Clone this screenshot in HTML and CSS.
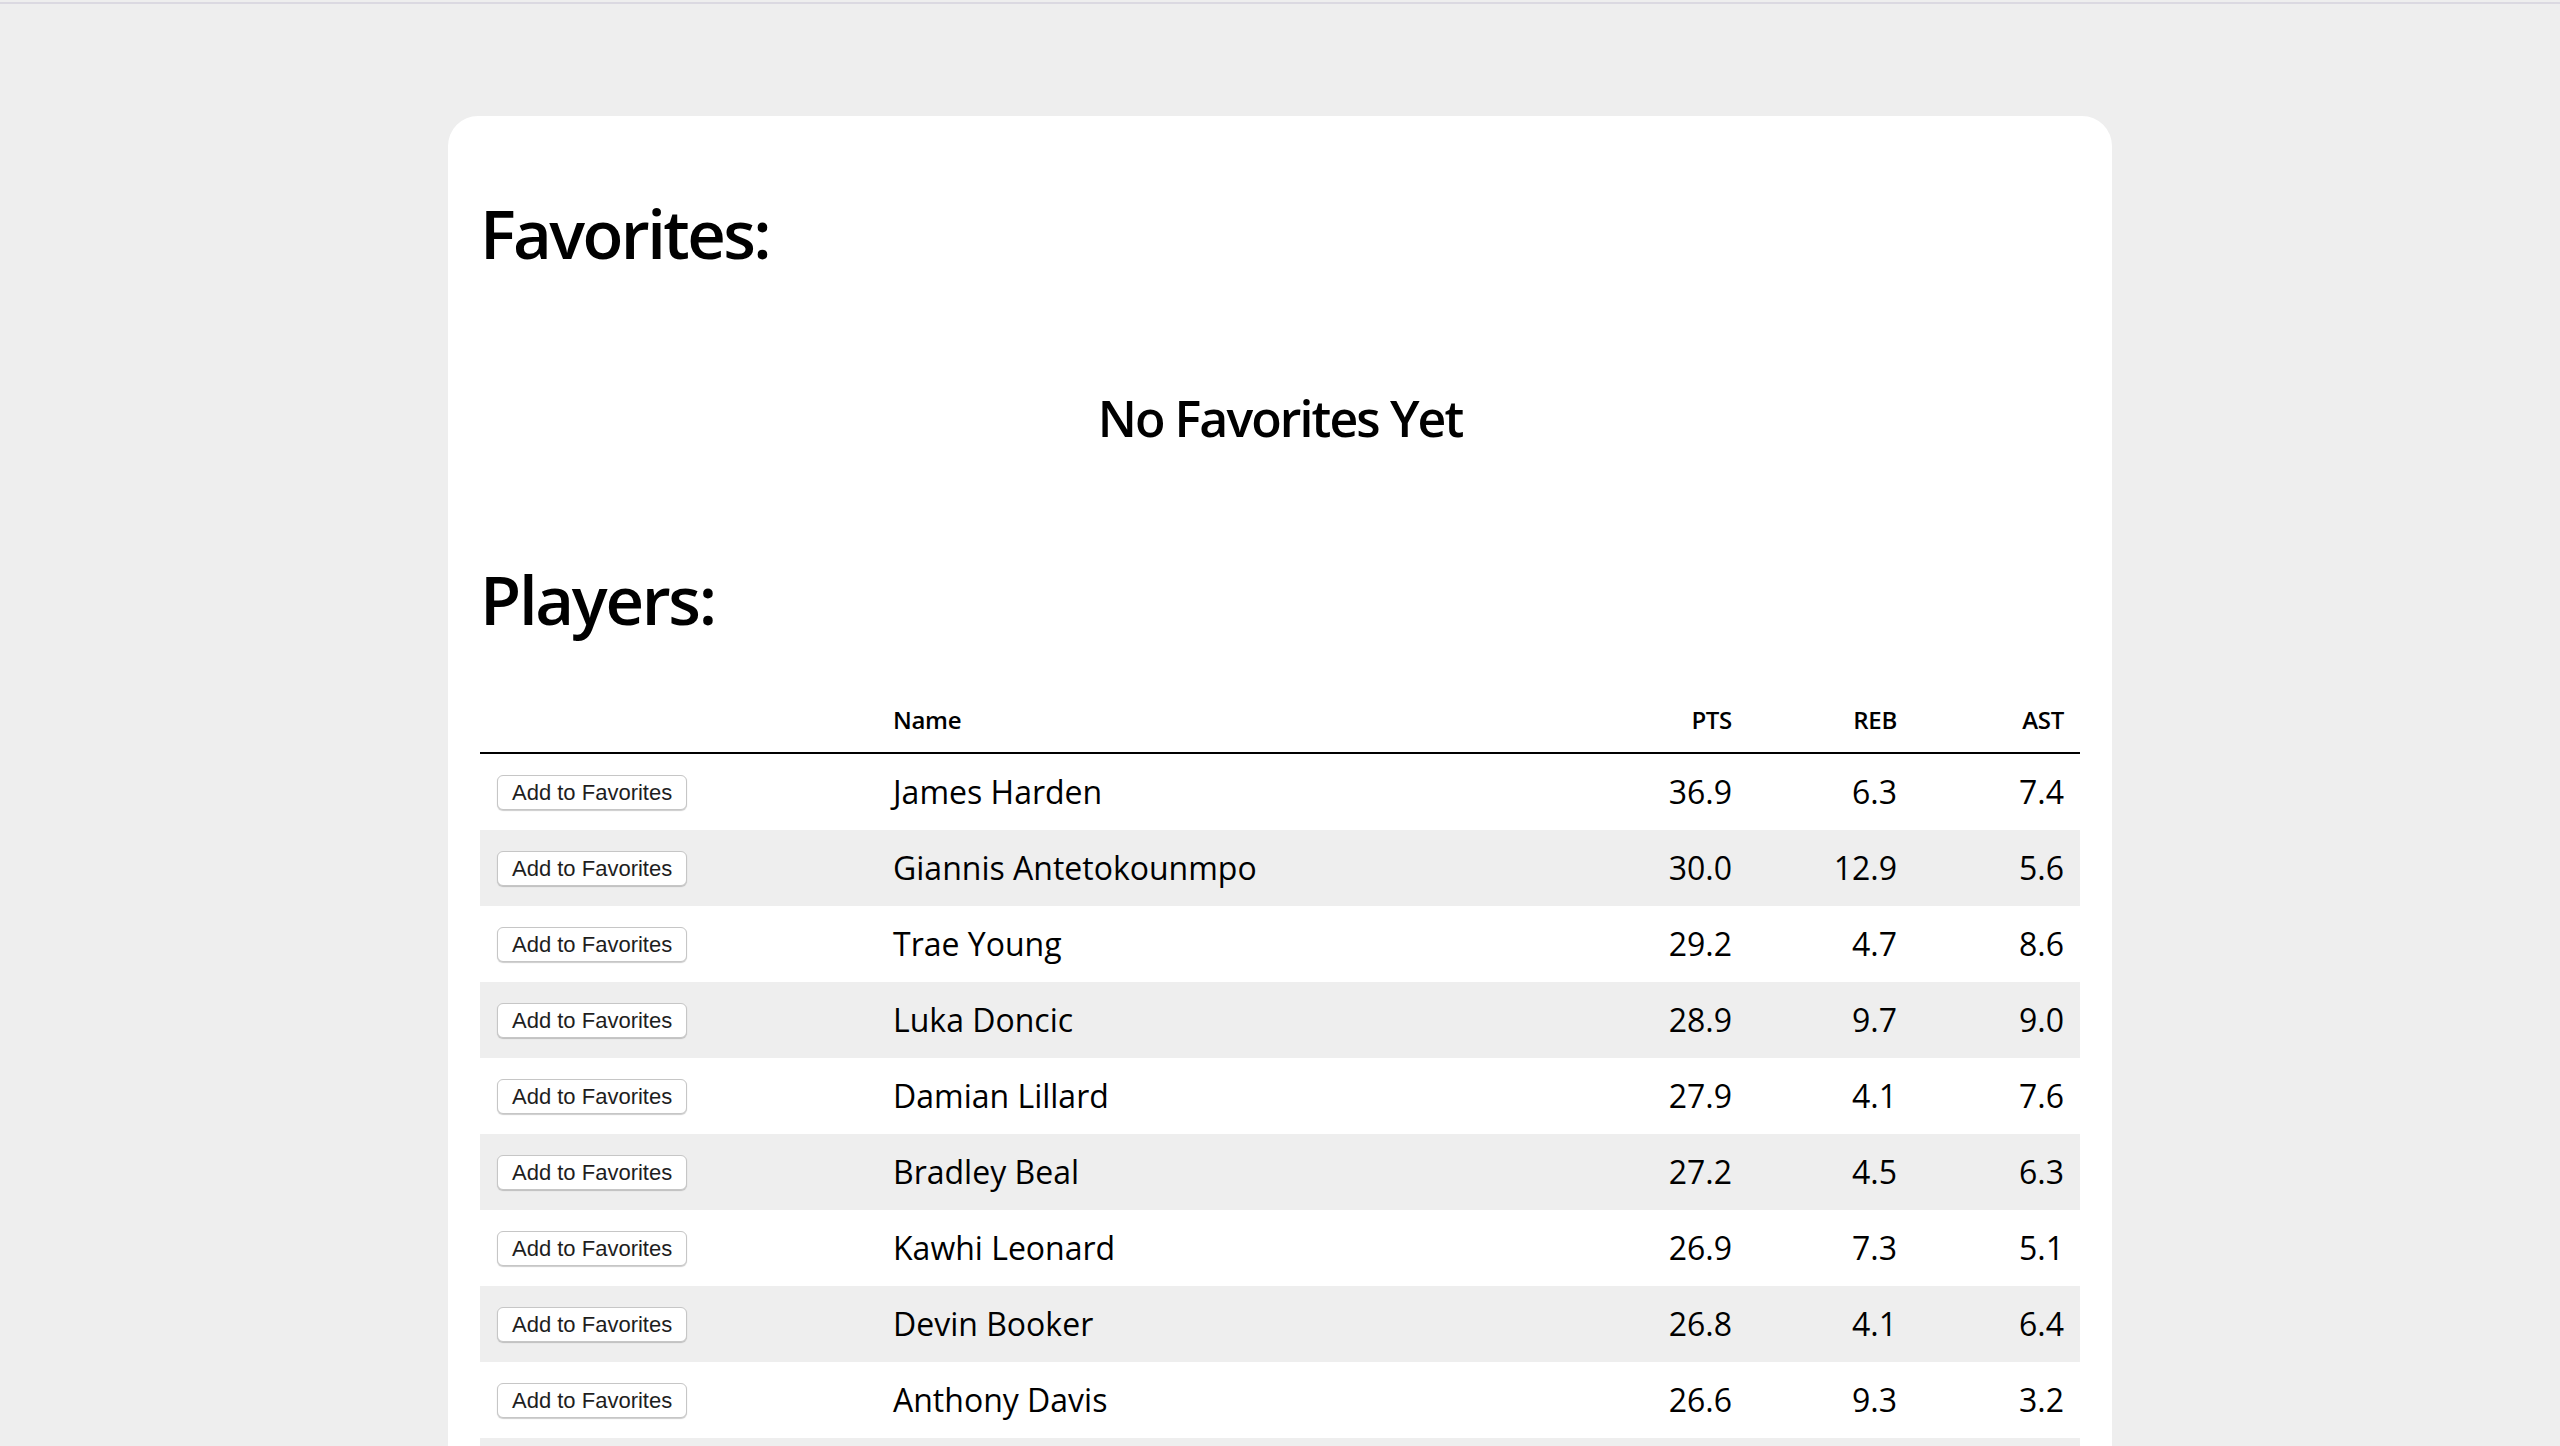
FILE: index.html
```html
<!DOCTYPE html>
<html lang="en">
<head>
<meta charset="utf-8">
<title>Players</title>
<link rel="stylesheet" href="styles.css">
</head>
<body>
<div class="topline"></div>
<main class="card">
  <h1 class="title title-first">Favorites:</h1>
  <div class="empty">
    <h2 class="empty-text">No Favorites Yet</h2>
  </div>
  <h1 class="title title-players">Players:</h1>
  <table class="players">
    <colgroup>
      <col class="c-btn">
      <col class="c-name">
      <col class="c-num">
      <col class="c-num">
      <col class="c-ast">
    </colgroup>
    <thead>
      <tr>
        <th></th>
        <th class="left">Name</th>
        <th class="right">PTS</th>
        <th class="right">REB</th>
        <th class="right">AST</th>
      </tr>
    </thead>
    <tbody>
      <tr><td><button class="fav">Add to Favorites</button></td><td>James Harden</td><td class="right">36.9</td><td class="right">6.3</td><td class="right">7.4</td></tr>
      <tr><td><button class="fav">Add to Favorites</button></td><td>Giannis Antetokounmpo</td><td class="right">30.0</td><td class="right">12.9</td><td class="right">5.6</td></tr>
      <tr><td><button class="fav">Add to Favorites</button></td><td>Trae Young</td><td class="right">29.2</td><td class="right">4.7</td><td class="right">8.6</td></tr>
      <tr><td><button class="fav">Add to Favorites</button></td><td>Luka Doncic</td><td class="right">28.9</td><td class="right">9.7</td><td class="right">9.0</td></tr>
      <tr><td><button class="fav">Add to Favorites</button></td><td>Damian Lillard</td><td class="right">27.9</td><td class="right">4.1</td><td class="right">7.6</td></tr>
      <tr><td><button class="fav">Add to Favorites</button></td><td>Bradley Beal</td><td class="right">27.2</td><td class="right">4.5</td><td class="right">6.3</td></tr>
      <tr><td><button class="fav">Add to Favorites</button></td><td>Kawhi Leonard</td><td class="right">26.9</td><td class="right">7.3</td><td class="right">5.1</td></tr>
      <tr><td><button class="fav">Add to Favorites</button></td><td>Devin Booker</td><td class="right">26.8</td><td class="right">4.1</td><td class="right">6.4</td></tr>
      <tr><td><button class="fav">Add to Favorites</button></td><td>Anthony Davis</td><td class="right">26.6</td><td class="right">9.3</td><td class="right">3.2</td></tr>
      <tr><td><button class="fav">Add to Favorites</button></td><td>Karl-Anthony Towns</td><td class="right">26.5</td><td class="right">10.8</td><td class="right">4.4</td></tr>
      <tr><td><button class="fav">Add to Favorites</button></td><td>Russell Westbrook</td><td class="right">26.3</td><td class="right">7.9</td><td class="right">6.8</td></tr>
    </tbody>
  </table>
</main>
</body>
</html>
```
FILE: styles.css
```css
html, body {
  margin: 0;
  padding: 0;
}

body {
  background: #eeeeee;
  font-family: "Open Sans", "Noto Sans", sans-serif;
  color: #000;
}

.topline {
  height: 2px;
  margin-top: 2px;
  background: #dbd9e1;
}

.card {
  width: 1600px;
  margin: 112px auto 0;
  padding: 32px;
  background: #ffffff;
  border-radius: 30px;
}

.title {
  font-size: 67px;
  font-weight: 600;
  margin: 0;
  line-height: 93px;
}

.title-first {
  margin-top: 39px;
  letter-spacing: -2.6px;
}

.title-players {
  margin-bottom: 42px;
  letter-spacing: -2.3px;
}

.empty {
  padding: 104px 0 101px;
  text-align: center;
}

.empty-text {
  margin: 0;
  font-size: 50px;
  font-weight: 600;
  letter-spacing: -1.9px;
  line-height: 68px;
}

.players {
  width: 1600px;
  border-collapse: collapse;
  table-layout: fixed;
}

.c-btn { width: 397px; }
.c-name { width: 706px; }
.c-num { width: 165px; }
.c-ast { width: 167px; }

.players th {
  font-size: 24px;
  font-weight: 600;
  letter-spacing: -0.3px;
  padding: 16px;
  line-height: 32px;
  border-bottom: 2px solid #000;
}

.players td {
  font-size: 32px;
  padding: 16px;
  height: 44px;
  line-height: 44px;
  vertical-align: middle;
}

.players tbody tr:nth-child(even) td {
  background: #eeeeee;
}

.left { text-align: left; }
.right { text-align: right; }

.fav {
  display: block;
  font-family: "Liberation Sans", Arial, sans-serif;
  font-size: 22px;
  line-height: 25px;
  color: #1e1e1e;
  background: #ffffff;
  border: 1px solid #c6c6c6;
  border-radius: 6px;
  padding: 4px 14px;
  box-shadow: 0 1px 1px rgba(0, 0, 0, 0.2);
  margin-left: 1px;
}
```
